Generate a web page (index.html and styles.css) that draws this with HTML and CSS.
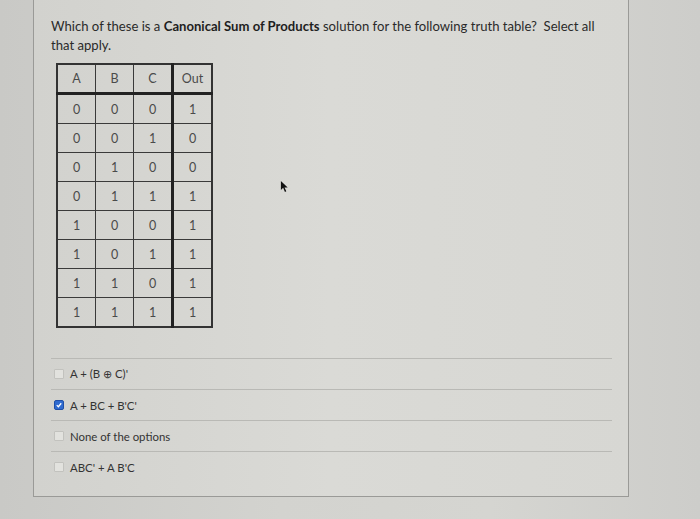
FILE: index.html
```html
<!DOCTYPE html>
<html>
<head>
<meta charset="utf-8">
<link rel="stylesheet" href="styles.css">
</head>
<body>
<div class="panel">
  <p class="question">Which of these is a <b>Canonical Sum of Products</b> solution for the following truth table?&nbsp; Select all that apply.</p>
  <table class="truth">
    <thead>
      <tr><th>A</th><th>B</th><th class="sep">C</th><th>Out</th></tr>
    </thead>
    <tbody>
      <tr><td>0</td><td>0</td><td class="sep">0</td><td>1</td></tr>
      <tr><td>0</td><td>0</td><td class="sep">1</td><td>0</td></tr>
      <tr><td>0</td><td>1</td><td class="sep">0</td><td>0</td></tr>
      <tr><td>0</td><td>1</td><td class="sep">1</td><td>1</td></tr>
      <tr><td>1</td><td>0</td><td class="sep">0</td><td>1</td></tr>
      <tr><td>1</td><td>0</td><td class="sep">1</td><td>1</td></tr>
      <tr><td>1</td><td>1</td><td class="sep">0</td><td>1</td></tr>
      <tr><td>1</td><td>1</td><td class="sep">1</td><td>1</td></tr>
    </tbody>
  </table>
  <ul class="options">
    <li><span class="box"></span><span>A + (B &#8853; C)'</span></li>
    <li><span class="box checked"><svg viewBox="0 0 10 10" width="10" height="10"><path d="M2.2 5.2 L4.2 7.2 L7.8 2.8" fill="none" stroke="#fff" stroke-width="1.6"/></svg></span><span>A + BC + B'C'</span></li>
    <li><span class="box"></span><span>None of the options</span></li>
    <li><span class="box"></span><span>ABC' + A B'C</span></li>
  </ul>
</div>
<svg class="cursor" viewBox="0 0 10 14" width="9" height="13"><path d="M1 1 L1 11 L3.5 8.5 L5.5 13 L7 12.3 L5 8 L8.5 8 Z" fill="#111"/></svg>
</body>
</html>
```

FILE: styles.css
```css
html, body {
  margin: 0;
  padding: 0;
}
body {
  width: 700px;
  height: 519px;
  overflow: hidden;
  background: linear-gradient(90deg, #c9c9c6 0%, #d3d3cf 40%, #d5d5d1 70%, #cdcdca 100%);
  font-family: Lato, "Open Sans", sans-serif;
  color: #2e2e2e;
  position: relative;
}
.panel {
  margin-left: 33px;
  width: 577px;
  height: 496px;
  border: 1px solid #9a9a97;
  border-top: none;
  background: linear-gradient(90deg, #d2d2ce 0%, #dadad6 50%, #d7d7d3 100%);
  padding: 0 0 0 17px;
  box-sizing: content-box;
}
.question {
  margin: 0;
  padding-top: 17px;
  font-size: 13.1px;
  line-height: 19px;
  width: 548px;
  color: #2a2a2a;
}
.question b {
  font-weight: 700;
  color: #1e1e1e;
}
.truth {
  margin: 8px 0 0 5px;
  border-collapse: collapse;
  border: 2px solid #333;
  font-size: 12.5px;
  color: #4a4a4a;
  font-variant-numeric: lining-nums;
}
.truth th, .truth td {
  width: 37px;
  height: 28px;
  padding: 0;
  text-align: center;
  border: 1px solid #3a3a3a;
  font-weight: 400;
}
.truth thead th {
  height: 27px;
  border-bottom: 3px solid #222;
}
.truth .sep {
  border-right: 3px solid #222;
}
.options {
  list-style: none;
  margin: 30px 0 0 0;
  padding: 0;
  width: 561px;
}
.options li {
  border-top: 1px solid #b9b9b5;
  height: 30px;
  display: flex;
  align-items: center;
  gap: 6px;
  font-size: 11.4px;
  color: #333;
  padding-left: 3px;
}
.box {
  width: 8px;
  height: 8px;
  border: 1px solid #c2c2be;
  background: #e2e2de;
  border-radius: 1px;
  display: inline-flex;
  align-items: center;
  justify-content: center;
}
.box.checked {
  background: #2f6bd0;
  border-color: #1f4fa6;
  border-radius: 2px;
}
.box svg {
  display: block;
}
.cursor {
  position: absolute;
  left: 280px;
  top: 180px;
}
```
